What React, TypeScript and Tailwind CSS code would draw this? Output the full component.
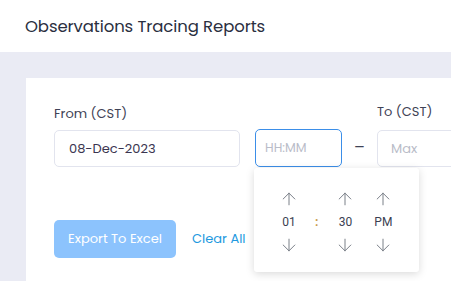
import { ArrowUp, ArrowDown } from "lucide-react";

const FONT = { fontFamily: "'Poppins', 'Open Sans', 'Noto Sans', sans-serif" };

function Spinner({ value }: { value: string }) {
  return (
    <div className="flex flex-col items-center gap-[6px] text-[#6f747e] shrink-0">
      <ArrowUp size={20} strokeWidth={1.1} className="shrink-0" />
      <span className="text-[12px] leading-[14px] text-[#3b3f52]" style={{ fontFamily: "Roboto, 'Liberation Sans', sans-serif" }}>{value}</span>
      <ArrowDown size={20} strokeWidth={1.1} className="shrink-0" />
    </div>
  );
}

export default function App() {
  return (
    <div className="w-[451px] h-[281px] overflow-hidden bg-[#eaebf4] text-[#2d3142]" style={FONT}>
      <header className="h-[52px] bg-white flex items-center pl-[25px] pt-[3px]">
        <h1 className="text-[16.5px] tracking-[-0.1px] text-[#2b2f3f]">Observations Tracing Reports</h1>
      </header>

      <div className="pl-[26px] pt-[26px]">
        <div className="bg-white h-[240px] pl-[28px] pt-[26px]">
          <div className="flex items-end">
            <div className="flex flex-col gap-[8px] shrink-0">
              <label className="text-[13px] leading-[16px] text-[#3f4356]">From (CST)</label>
              <div className="w-[186px] h-[37px] border border-[#e2e4ee] rounded-[5px] flex items-center pl-[14px] text-[13px] text-[#3a3550]">
                08-Dec-2023
              </div>
            </div>

            <div className="relative ml-[15px] shrink-0">
              <div className="w-[87px] h-[38px] border border-[#3b8ee8] rounded-[5px] flex items-center pl-[9px] text-[12.5px] text-[#b9bcc8]">
                HH:MM
              </div>
              <div className="absolute left-[-1px] top-[39px] w-[165px] h-[104px] bg-white rounded-[3px] shadow-[0_2px_8px_rgba(0,0,0,0.15)] flex items-center pl-[25px] pt-[4px] z-10">
                <Spinner value="01" />
                <span className="ml-[16px] mr-[17px] text-[12px] font-bold text-[#c99a4a]" style={{ fontFamily: "Roboto, sans-serif" }}>:</span>
                <Spinner value="30" />
                <div className="ml-[18px]">
                  <Spinner value="PM" />
                </div>
              </div>
            </div>

            <div className="w-[35px] h-[38px] shrink-0 flex items-center justify-center text-[#3f4356] text-[16px]">–</div>

            <div className="flex flex-col gap-[6px] shrink-0">
              <label className="text-[13px] leading-[16px] text-[#3f4356] mb-[4px]">To (CST)</label>
              <div className="w-[120px] h-[37px] border border-[#e2e4ee] rounded-[5px] flex items-center pl-[13px] text-[13px] text-[#b9bcc8]">
                Max
              </div>
            </div>
          </div>

          <div className="flex items-center mt-[53px] gap-[16px]">
            <button className="w-[122px] h-[38px] rounded-[5px] bg-[#8cc3fd] text-white text-[13px]">Export To Excel</button>
            <span className="text-[13px] text-[#1f9ae0]">Clear All</span>
          </div>
        </div>
      </div>
    </div>
  );
}
